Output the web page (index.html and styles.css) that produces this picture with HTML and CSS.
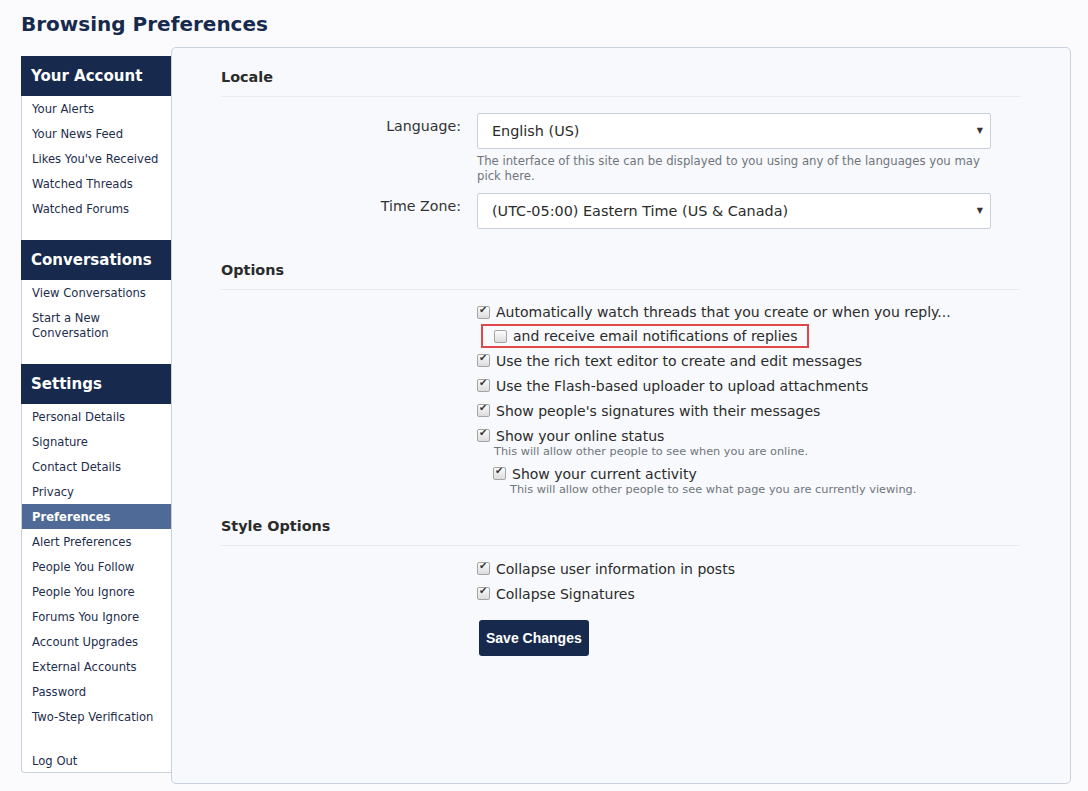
FILE: index.html
```html
<!DOCTYPE html>
<html lang="en">
<head>
    <meta charset="UTF-8">
    <title>Browsing Preferences</title>
    <link rel="stylesheet" href="styles.css">
</head>
<body>

<h1 class="page-title">Browsing Preferences</h1>

<div class="layout">
    <div class="sidebar">
        <h3 class="side-head">Your Account</h3>
        <ul class="side-list">
            <li><a href="#">Your Alerts</a></li>
            <li><a href="#">Your News Feed</a></li>
            <li><a href="#">Likes You've Received</a></li>
            <li><a href="#">Watched Threads</a></li>
            <li><a href="#">Watched Forums</a></li>
        </ul>

        <h3 class="side-head">Conversations</h3>
        <ul class="side-list">
            <li><a href="#">View Conversations</a></li>
            <li><a href="#">Start a New Conversation</a></li>
        </ul>

        <h3 class="side-head">Settings</h3>
        <ul class="side-list">
            <li><a href="#">Personal Details</a></li>
            <li><a href="#">Signature</a></li>
            <li><a href="#">Contact Details</a></li>
            <li><a href="#">Privacy</a></li>
            <li class="selected"><a href="#">Preferences</a></li>
            <li><a href="#">Alert Preferences</a></li>
            <li><a href="#">People You Follow</a></li>
            <li><a href="#">People You Ignore</a></li>
            <li><a href="#">Forums You Ignore</a></li>
            <li><a href="#">Account Upgrades</a></li>
            <li><a href="#">External Accounts</a></li>
            <li><a href="#">Password</a></li>
            <li><a href="#">Two-Step Verification</a></li>
        </ul>
        <ul class="side-list logout">
            <li><a href="#">Log Out</a></li>
        </ul>
    </div>

    <form class="panel" onsubmit="return false">
        <h2 class="section-head">Locale</h2>
        <div class="rows">
            <div class="row">
                <label class="row-label">Language:</label>
                <div class="row-ctrl">
                    <div class="select">English (US)</div>
                    <p class="hint">The interface of this site can be displayed to you using any of the languages you may pick here.</p>
                </div>
            </div>
            <div class="row">
                <label class="row-label">Time Zone:</label>
                <div class="row-ctrl">
                    <div class="select">(UTC-05:00) Eastern Time (US &amp; Canada)</div>
                </div>
            </div>
        </div>

        <h2 class="section-head">Options</h2>
        <div class="checks">
            <div class="check first"><span class="cb on"></span>Automatically watch threads that you create or when you reply...</div>
            <div class="check sub boxed"><span class="cb"></span>and receive email notifications of replies</div>
            <div class="check"><span class="cb on"></span>Use the rich text editor to create and edit messages</div>
            <div class="check"><span class="cb on"></span>Use the Flash-based uploader to upload attachments</div>
            <div class="check"><span class="cb on"></span>Show people's signatures with their messages</div>
            <div class="check"><span class="cb on"></span>Show your online status</div>
            <p class="check-hint">This will allow other people to see when you are online.</p>
            <div class="check sub"><span class="cb on"></span>Show your current activity</div>
            <p class="check-hint sub">This will allow other people to see what page you are currently viewing.</p>
        </div>

        <h2 class="section-head">Style Options</h2>
        <div class="checks">
            <div class="check"><span class="cb on"></span>Collapse user information in posts</div>
            <div class="check"><span class="cb on"></span>Collapse Signatures</div>
            <button type="submit" class="save">Save Changes</button>
        </div>
    </form>
</div>

</body>
</html>
```

FILE: styles.css
```css
body {
    margin: 0;
    padding: 10px 17px 0 21px;
    background: #fbfbfd;
    font-family: "DejaVu Sans", Verdana, sans-serif;
    color: #2b2b2b;
}
.page-title {
    margin: 0 0 9px;
    font-size: 20px;
    color: #172a4d;
    line-height: 28px;
}
.layout {
    display: flex;
    align-items: flex-start;
}

/* sidebar */
.sidebar {
    width: 149px;
    margin-top: 9px;
    background: #fff;
    border: 1px solid #c9d1dd;
    border-top: none;
    border-right: none;
    border-radius: 0 0 0 4px;
}
.side-head {
    margin: 0 0 0 -1px;
    height: 40px;
    line-height: 41px;
    padding-left: 10px;
    background: #172a4d;
    color: #fff;
    font-size: 15px;
}
.side-list {
    list-style: none;
    margin: 0 0 19px;
    padding: 0;
}
.side-list li {
    padding: 6px 10px 4px;
    line-height: 15px;
    font-size: 11.6px;
}
.side-list li a {
    color: #1e2d4c;
    text-decoration: none;
}
.side-list li.selected {
    background: #4f6a97;
}
.side-list li.selected a {
    color: #fff;
    font-weight: bold;
}
.side-list.logout {
    margin: 0;
}
.side-list.logout li {
    padding-bottom: 3px;
}

/* main panel */
.panel {
    flex: 1;
    height: 716px;
    background: #f7f9fc;
    border: 1px solid #c9d1dd;
    border-radius: 5px;
    padding: 19px 50px 0 49px;
}
.section-head {
    margin: 0 0 10px;
    padding-bottom: 9px;
    font-size: 14.4px;
    line-height: 20px;
    color: #2b2b2b;
    border-bottom: 1px solid #e6ebf2;
}
.rows {
    padding-top: 6px;
    margin-bottom: 31px;
}
.row {
    display: flex;
    margin-bottom: 9px;
}
.row:last-child {
    margin-bottom: 0;
}
.row-label {
    width: 240px;
    margin-right: 16px;
    text-align: right;
    font-size: 14.2px;
    padding-top: 4px;
    line-height: 18px;
    color: #333;
}
.row-ctrl {
    flex: 1;
}
.select {
    position: relative;
    width: 484px;
    height: 34px;
    line-height: 35px;
    padding: 0 14px;
    background: #fff;
    border: 1px solid #c9d1dd;
    border-radius: 2px;
    font-size: 14.4px;
    color: #2b2b2b;
}
.select::after {
    content: "\25BC";
    position: absolute;
    right: 7px;
    top: 0;
    font-size: 8px;
    line-height: 34px;
    color: #333;
}
.hint {
    width: 514px;
    margin: 5px 0 0;
    font-size: 11.7px;
    line-height: 15px;
    color: #70757d;
}
.checks {
    padding-left: 256px;
    margin-bottom: 19px;
}
.check {
    display: flex;
    align-items: center;
    height: 25px;
    font-size: 14px;
    color: #2b2b2b;
}
.check.first {
    height: 24px;
}
.check.sub {
    padding-left: 16px;
}
.check.boxed {
    box-sizing: border-box;
    height: 24px;
    width: fit-content;
    margin-left: 4px;
    padding: 0 9px 0 11px;
    border: 2px solid #e04848;
}
.cb {
    flex: none;
    width: 11px;
    height: 11px;
    margin-right: 6px;
    border: 1px solid #a5a5a5;
    border-radius: 2px;
    background: linear-gradient(#fcfcfc, #dcdcdc);
    position: relative;
}
.cb.on::after {
    content: "\2714";
    position: absolute;
    left: 1px;
    top: -3px;
    font-size: 10px;
    color: #333;
}
.check-hint {
    margin: -4px 0 2px;
    padding-left: 17px;
    font-size: 11.3px;
    line-height: 15px;
    color: #70757d;
}
.check-hint.sub {
    margin-bottom: 0;
    padding-left: 33px;
}
.save {
    margin: 14px 0 0 2px;
    padding: 0 7px;
    height: 36px;
    background: #172a4d;
    color: #fff;
    border: none;
    border-radius: 3px;
    font-family: "Liberation Sans", Arial, sans-serif;
    font-weight: bold;
    font-size: 14px;
}
```
